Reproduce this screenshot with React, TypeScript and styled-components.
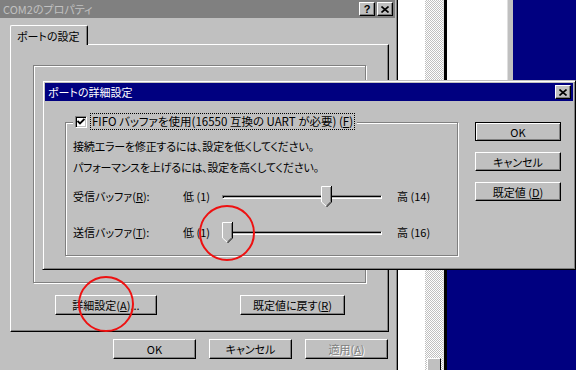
import React from 'react';
import styled, { createGlobalStyle } from 'styled-components';

const GlobalStyle = createGlobalStyle`
	html, body {
		margin: 0;
		padding: 0;
	}
	body {
		width: 576px;
		height: 370px;
		overflow: hidden;
		background: #000080;
		font-family: 'Noto Sans CJK JP', 'Noto Sans', sans-serif;
		font-size: 11px;
		line-height: 16px;
		font-feature-settings: 'palt';
		color: #000;
	}
`;

const Desktop = styled.div`
	position: relative;
	display: flex;
	align-items: flex-start;
	width: 576px;
	height: 370px;
	background: #000080;
	overflow: hidden;
`;

/* ---------- window chrome ---------- */

const TitleBar = styled.div<{ $active?: boolean }>`
	flex-shrink: 0;
	display: flex;
	align-items: center;
	height: 18px;
	padding: 0 2px 0 3px;
	box-sizing: border-box;
	background: ${({ $active }) => ($active ? '#000080' : '#808080')};
	color: ${({ $active }) => ($active ? '#fff' : '#c0c0c0')};
	white-space: nowrap;
`;

const TitleText = styled.span`
	flex: 1;
	overflow: hidden;
`;

const CaptionButton = styled.div`
	display: flex;
	align-items: center;
	justify-content: center;
	width: 16px;
	height: 14px;
	box-sizing: border-box;
	background: #c0c0c0;
	border: 1px solid;
	border-color: #fff #000 #000 #fff;
	box-shadow: inset -1px -1px 0 #808080;
	color: #000;
	font: bold 11px/1 'Liberation Sans', sans-serif;

	& + & {
		margin-left: 2px;
	}
`;

const CloseGlyph = () => (
	<svg width="8" height="7" viewBox="0 0 8 7">
		<path d="M0.5 0.5L7.5 6.5M7.5 0.5L0.5 6.5" stroke="#000" strokeWidth="1.6" />
	</svg>
);

const Button = styled.div<{ $width: number; $height?: number; $default?: boolean; $disabled?: boolean }>`
	display: flex;
	align-items: center;
	justify-content: center;
	width: ${({ $width }) => $width}px;
	height: ${({ $height }) => $height ?? 20}px;
	box-sizing: border-box;
	background: #c0c0c0;
	border: 1px solid;
	border-color: ${({ $default }) => ($default ? '#000' : '#fff #000 #000 #fff')};
	box-shadow: ${({ $default }) =>
		$default ? 'inset 1px 1px 0 #fff, inset -1px -1px 0 #808080' : 'inset -1px -1px 0 #808080'};
	color: ${({ $disabled }) => ($disabled ? '#808080' : '#000')};
	text-shadow: ${({ $disabled }) => ($disabled ? '1px 1px 0 #fff' : 'none')};
	white-space: nowrap;
`;

const Key = styled.span`
	text-decoration: underline;
`;

/* ---------- background property sheet ---------- */

const BackWindow = styled.div`
	flex: 0 0 398px;
	height: 370px;
	display: flex;
	flex-direction: column;
	box-sizing: border-box;
	padding-right: 2px;
	background: #c0c0c0;
	border-right: 1px solid #000;
	box-shadow: inset -1px 0 0 #808080;
`;

const SheetBody = styled.div`
	flex: 1;
	display: flex;
	flex-direction: column;
	padding: 7px 6px 0 10px;
`;

const TabRow = styled.div`
	display: flex;
	position: relative;
	z-index: 1;
	margin-bottom: -1px;
`;

const Tab = styled.div`
	height: 20px;
	width: 78px;
	box-sizing: border-box;
	padding: 2px 0 0 6px;
	background: #c0c0c0;
	border: 1px solid;
	border-color: #fff #000 transparent #fff;
	border-bottom: 0;
	border-radius: 2px 2px 0 0;
	box-shadow: inset -1px 0 0 #808080;
`;

const TabPanel = styled.div`
	height: 288px;
	box-sizing: border-box;
	padding: 20px 0 0 22px;
	border: 1px solid;
	border-color: #fff #000 #000 #fff;
	box-shadow: inset -1px -1px 0 #808080;
`;

const EtchedBox = styled.div<{ $width: number; $height: number }>`
	width: ${({ $width }) => $width}px;
	height: ${({ $height }) => $height}px;
	box-sizing: border-box;
	border: 1px solid #808080;
	box-shadow: 1px 1px 0 #fff, inset 1px 1px 0 #fff;
`;

const SheetButtons = styled.div`
	display: flex;
	gap: 83px;
	margin-top: 12px;
	padding-left: 22px;
`;

const DialogButtons = styled.div`
	display: flex;
	justify-content: flex-end;
	gap: 13px;
	margin-top: 7px;
	padding-right: 1px;
`;

/* ---------- windows on the right ---------- */

const ListWindow = styled.div`
	flex: 0 0 49px;
	height: 370px;
	display: flex;
	box-sizing: border-box;
	background: #fff;
	border-right: 3px solid #000;
`;

const ListArea = styled.div`
	flex: 0 0 27px;
`;

const ScrollBar = styled.div`
	flex: 0 0 18px;
	display: flex;
	flex-direction: column;
	border-right: 1px solid #dfdfdf;
	background: repeating-conic-gradient(#c0c0c0 0 25%, #fff 0 50%) 0 0 / 2px 2px;
`;

const ScrollThumb = styled.div`
	margin: auto 2px 0 2px;
	height: 11px;
	background: #c0c0c0;
	border-top: 1px solid #fff;
	border-left: 1px solid #fff;
	border-right: 1px solid #000;
`;

const TopWindow = styled.div`
	flex: 0 0 66px;
	height: 150px;
	box-sizing: border-box;
	background: #fff;
	border-right: 5px solid #c0c0c0;
	box-shadow: inset -1px 0 0 #dfdfdf;
`;

/* ---------- advanced settings dialog ---------- */

const Dialog = styled.div`
	position: absolute;
	left: 42px;
	top: 80px;
	width: 534px;
	height: 190px;
	box-sizing: border-box;
	display: flex;
	flex-direction: column;
	padding: 2px;
	background: #c0c0c0;
	border: 1px solid;
	border-color: #c0c0c0 #000 #000 #c0c0c0;
	box-shadow: inset 1px 1px 0 #fff, inset -1px -1px 0 #808080;
`;

const DialogBody = styled.div`
	flex: 1;
	display: flex;
	align-items: flex-start;
	padding: 21px 0 0 20px;
`;

const Group = styled(EtchedBox)`
	padding: 0 7px;
`;

const GroupLegend = styled.div`
	display: flex;
	align-items: center;
	width: max-content;
	height: 17px;
	margin-top: -10px;
	padding: 0 2px;
	background: #c0c0c0;
`;

const CheckBox = styled.div`
	display: flex;
	align-items: center;
	justify-content: center;
	width: 12px;
	height: 12px;
	box-sizing: border-box;
	margin-right: 3px;
	background: #fff;
	border: 1px solid;
	border-color: #808080 #fff #fff #808080;
	box-shadow: inset 1px 1px 0 #000, inset -1px -1px 0 #c0c0c0;
`;

const FocusLabel = styled.span`
	height: 15px;
	line-height: 15px;
	padding: 0 1px;
	border: 1px dotted #000;
	font-size: 11.5px;
	white-space: nowrap;
`;

const HintBlock = styled.div`
	margin-top: 6px;
`;

const Hint = styled.div`
	line-height: 21px;
	letter-spacing: -0.2px;
	white-space: nowrap;
`;

const SliderRow = styled.div<{ $gap: number }>`
	display: grid;
	grid-template-columns: 110px 39px 160px 15px auto;
	align-items: center;
	height: 22px;
	margin-top: ${({ $gap }) => $gap}px;
	white-space: nowrap;
`;

const Channel = styled.div`
	position: relative;
	height: 4px;
	margin-top: 1px;
	box-sizing: border-box;
	border: 1px solid;
	border-color: #808080 #fff #fff #808080;
	box-shadow: inset 1px 1px 0 #000;
`;

const Thumb = styled.svg`
	position: absolute;
	top: -10px;
	display: block;
`;

const SideButtons = styled.div`
	display: flex;
	flex-direction: column;
	gap: 11px;
	margin-left: 17px;
`;

const RedMark = styled.svg<{ $x: number; $y: number }>`
	position: absolute;
	left: ${({ $x }) => $x}px;
	top: ${({ $y }) => $y}px;
	pointer-events: none;
`;

const TRACK = 160;
const THUMB = 11;

const Slider: React.FC<{ step: number; steps: number }> = ({ step, steps }) => (
	<Channel>
		<Thumb
			width={THUMB}
			height="21"
			viewBox="0 0 11 21"
			style={{ left: Math.round((step / (steps - 1)) * (TRACK - THUMB)) - 1 }}
		>
			<path d="M0 0H11V16L5.5 21L0 16Z" fill="#c0c0c0" />
			<path d="M0.5 16V0.5H10" stroke="#fff" fill="none" />
			<path d="M0.5 16L5.5 20.5" stroke="#fff" fill="none" />
			<path d="M10.5 0V16L5.5 21" stroke="#000" fill="none" />
			<path d="M9.5 1V15.5L5.5 19.5" stroke="#808080" fill="none" />
		</Thumb>
	</Channel>
);

const Circle: React.FC<{ cx: number; cy: number; r: number }> = ({ cx, cy, r }) => (
	<RedMark $x={cx - r - 2} $y={cy - r - 2} width={2 * r + 4} height={2 * r + 4}>
		<circle cx={r + 2} cy={r + 2} r={r} fill="none" stroke="#ee1111" strokeWidth="2" />
	</RedMark>
);

const App: React.FC = () => {
	return (
		<>
			<GlobalStyle />
			<Desktop>
				<BackWindow>
					<TitleBar>
						<TitleText>COM2のプロパティ</TitleText>
						<CaptionButton>?</CaptionButton>
						<CaptionButton>
							<CloseGlyph />
						</CaptionButton>
					</TitleBar>
					<SheetBody>
						<TabRow>
							<Tab>ポートの設定</Tab>
						</TabRow>
						<TabPanel>
							<EtchedBox $width={333} $height={218} />
							<SheetButtons>
								<Button $width={102}>
									詳細設定(<Key>A</Key>)...
								</Button>
								<Button $width={105}>
									既定値に戻す(<Key>R</Key>)
								</Button>
							</SheetButtons>
						</TabPanel>
						<DialogButtons>
							<Button $width={83}>OK</Button>
							<Button $width={83}>キャンセル</Button>
							<Button $width={83} $disabled>
								適用(<Key>A</Key>)
							</Button>
						</DialogButtons>
					</SheetBody>
				</BackWindow>

				<ListWindow>
					<ListArea />
					<ScrollBar>
						<ScrollThumb />
					</ScrollBar>
				</ListWindow>

				<TopWindow />

				<Dialog>
					<TitleBar $active>
						<TitleText>ポートの詳細設定</TitleText>
						<CaptionButton>
							<CloseGlyph />
						</CaptionButton>
					</TitleBar>
					<DialogBody>
						<Group $width={393} $height={134}>
							<GroupLegend>
								<CheckBox>
									<svg width="8" height="7" viewBox="0 0 8 7">
										<path d="M0.5 3L3 5.5L7.5 1" stroke="#000" strokeWidth="1.8" fill="none" />
									</svg>
								</CheckBox>
								<FocusLabel>
									FIFO バッファを使用(16550 互換の UART が必要) (<Key>F</Key>)
								</FocusLabel>
							</GroupLegend>
							<HintBlock>
								<Hint>接続エラーを修正するには、設定を低くしてください。</Hint>
								<Hint>パフォーマンスを上げるには、設定を高くしてください。</Hint>
							</HintBlock>
							<SliderRow $gap={7}>
								<span>
									受信バッファ(<Key>R</Key>):
								</span>
								<span>低 (1)</span>
								<Slider step={2} steps={4} />
								<span />
								<span>高 (14)</span>
							</SliderRow>
							<SliderRow $gap={14}>
								<span>
									送信バッファ(<Key>T</Key>):
								</span>
								<span>低 (1)</span>
								<Slider step={0} steps={4} />
								<span />
								<span>高 (16)</span>
							</SliderRow>
						</Group>
						<SideButtons>
							<Button $width={86} $height={19} $default>
								OK
							</Button>
							<Button $width={86} $height={19}>
								キャンセル
							</Button>
							<Button $width={86} $height={19}>
								既定値 (<Key>D</Key>)
							</Button>
						</SideButtons>
					</DialogBody>
				</Dialog>

				<Circle cx={227} cy={233} r={27} />
				<Circle cx={106} cy={304} r={27} />
			</Desktop>
		</>
	);
};

export default App;
